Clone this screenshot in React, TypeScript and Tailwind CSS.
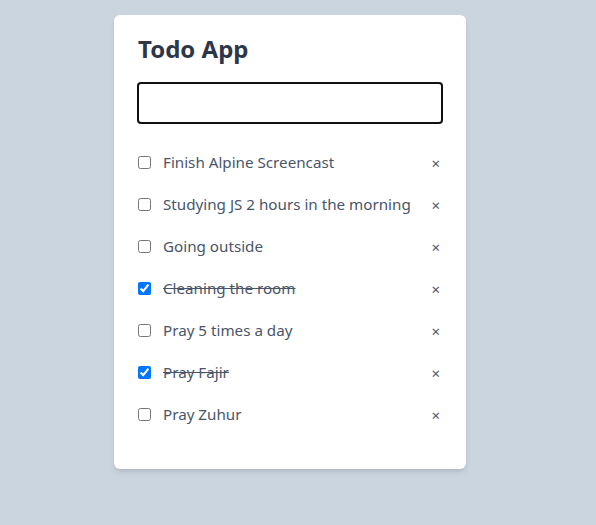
import React, { useState } from 'react';

type Todo = { id: number; title: string; done: boolean };

const App: React.FC = () => {
  const [text, setText] = useState('');
  const [todos, setTodos] = useState<Todo[]>([
    { id: 1, title: 'Finish Alpine Screencast', done: false },
    { id: 2, title: 'Studying JS 2 hours in the morning', done: false },
    { id: 3, title: 'Going outside', done: false },
    { id: 4, title: 'Cleaning the room', done: true },
    { id: 5, title: 'Pray 5 times a day', done: false },
    { id: 6, title: 'Pray Fajir', done: true },
    { id: 7, title: 'Pray Zuhur', done: false },
  ]);

  const toggle = (id: number) =>
    setTodos(todos.map((t) => (t.id === id ? { ...t, done: !t.done } : t)));
  const remove = (id: number) => setTodos(todos.filter((t) => t.id !== id));

  return (
    <div className="min-h-screen bg-[#cbd5e0] pt-[15px] font-['Noto_Sans',sans-serif]">
      <div className="ml-[114px] w-[352px] bg-white rounded-md shadow-md px-6 pt-[18px] pb-[34px]">
        <h1 className="text-2xl leading-8 font-bold text-[#2d3748]">Todo App</h1>
        <input
          type="text"
          value={text}
          onChange={(e) => setText(e.target.value)}
          className="mt-[17px] -mx-px w-[306px] h-[42px] border-2 border-[#111] rounded outline-none px-3"
        />
        <ul className="mt-[17px]">
          {todos.map((todo) => (
            <li key={todo.id} className="flex items-center h-[42px]">
              <input
                type="checkbox"
                checked={todo.done}
                onChange={() => toggle(todo.id)}
                className="w-[13px] h-[13px] m-0"
              />
              <span
                className={`ml-3 flex-1 text-[15.2px] text-[#4a5568] ${todo.done ? 'line-through' : ''}`}
              >
                {todo.title}
              </span>
              <button
                onClick={() => remove(todo.id)}
                className="text-[#4a5568] text-[15px] leading-none mr-[2px] mt-[3px]"
              >
                ×
              </button>
            </li>
          ))}
        </ul>
      </div>
    </div>
  );
};

export default App;
